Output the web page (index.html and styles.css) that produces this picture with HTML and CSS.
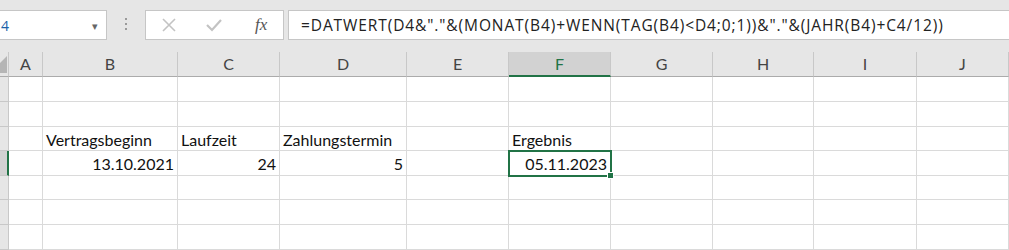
FILE: index.html
```html
<!DOCTYPE html>
<html lang="de">

<head>
    <title>Datumsberechnung</title>
    <link rel="stylesheet" href="styles.css">
</head>

<body>

    <div class="toolbar">
        <div class="namebox">
            <span class="name">4</span>
            <span class="drop">&#9662;</span>
        </div>
        <div class="grip">
            <span></span><span></span><span></span>
        </div>
        <div class="buttons">
            <svg class="btn" width="16" height="16" viewBox="0 0 16 16">
                <path d="M2 2 L14 14 M14 2 L2 14" stroke="#c3c3c3" stroke-width="1.6" fill="none" />
            </svg>
            <svg class="btn" width="18" height="16" viewBox="0 0 18 16">
                <path d="M2 8 L7 13 L16 3" stroke="#c3c3c3" stroke-width="2.2" fill="none" />
            </svg>
            <span class="fx">fx</span>
        </div>
        <div class="formula">=DATWERT(D4&amp;"."&amp;(MONAT(B4)+WENN(TAG(B4)&lt;D4;0;1))&amp;"."&amp;(JAHR(B4)+C4/12))</div>
    </div>

    <div class="sheet" id="sheet"></div>

    <script>
        const sheet = document.getElementById('sheet');
        const cols = ['A', 'B', 'C', 'D', 'E', 'F', 'G', 'H', 'I', 'J'];
        const data = {
            'B3': 'Vertragsbeginn', 'C3': 'Laufzeit', 'D3': 'Zahlungstermin', 'F3': 'Ergebnis',
            'B4': '13.10.2021', 'C4': '24', 'D4': '5', 'F4': '05.11.2023'
        };
        const numbers = ['B4', 'C4', 'D4', 'F4'];

        function addCell(cls, text) {
            const el = document.createElement('div');
            el.className = cls;
            if (text) el.textContent = text;
            sheet.appendChild(el);
            return el;
        }

        addCell('corner').innerHTML = '<span class="tri"></span>';
        cols.forEach(c => {
            addCell(c === 'F' ? 'colhead active' : 'colhead', c);
        });

        for (let r = 1; r <= 7; r++) {
            addCell(r === 4 ? 'rowhead active' : 'rowhead');
            cols.forEach(c => {
                const key = c + r;
                let cls = 'cell';
                if (numbers.includes(key)) cls += ' num';
                if (key === 'F4') cls += ' selected';
                const el = addCell(cls, data[key]);
                if (key === 'F4') el.innerHTML += '<span class="handle"></span>';
            });
        }
    </script>

</body>

</html>
```

FILE: styles.css
```css
body {
    margin: 0;
    width: 1009px;
    height: 250px;
    overflow: hidden;
    background-color: #ffffff;
    font-family: Lato, "Liberation Sans", sans-serif;
}

.toolbar {
    display: flex;
    align-items: flex-start;
    height: 52px;
    padding-top: 10px;
    box-sizing: border-box;
    background-color: #e6e6e6;
}

.namebox {
    display: flex;
    align-items: center;
    justify-content: space-between;
    width: 120px;
    height: 30px;
    margin-left: -13px;
    padding: 0 8px 0 13px;
    box-sizing: border-box;
    background-color: #fff;
    border: 1px solid #c6c6c6;
    font-family: "Open Sans", sans-serif;
    font-size: 14px;
    color: #1d5fa8;
}

.drop {
    font-size: 11px;
    color: #666;
}

.grip {
    display: flex;
    flex-direction: column;
    gap: 3px;
    width: 38px;
    padding-top: 8px;
    align-items: center;
}

.grip span {
    width: 2px;
    height: 2px;
    background-color: #9a9a9a;
}

.buttons {
    display: flex;
    align-items: center;
    width: 139px;
    height: 30px;
    box-sizing: border-box;
    background-color: #fff;
    border: 1px solid #c6c6c6;
    padding-left: 15px;
}

.btn {
    margin-right: 28px;
}

.btn + .btn {
    margin-right: 32px;
}

.fx {
    font-family: "Liberation Serif", serif;
    font-style: italic;
    font-size: 17px;
    color: #555;
}

.formula {
    flex: 1;
    height: 30px;
    margin-left: 4px;
    margin-right: -2px;
    box-sizing: border-box;
    background-color: #fff;
    border: 1px solid #c6c6c6;
    padding-left: 12px;
    line-height: 28px;
    font-family: "Open Sans", sans-serif;
    font-size: 15.5px;
    letter-spacing: 0.9px;
    color: #222;
    white-space: nowrap;
}

.sheet {
    display: grid;
    grid-template-columns: 9px 34px 135px 102px 127px 102px 102px 102px 101px 103px 1fr;
    grid-template-rows: 25px 25px 25px 24px 25px 24px 25px 25px;
    font-size: 16px;
    color: #111;
}

.sheet > div {
    box-sizing: border-box;
    border-right: 1px solid #dadada;
    border-bottom: 1px solid #dadada;
}

.corner {
    position: relative;
    background-color: #e6e6e6;
    border-bottom-color: #ababab !important;
    border-right-color: #c8c8c8 !important;
}

.tri {
    position: absolute;
    right: 1px;
    bottom: 3px;
    width: 0;
    height: 0;
    border-left: 17px solid transparent;
    border-bottom: 17px solid #b5b5b5;
}

.colhead {
    background-color: #e6e6e6;
    border-right-color: #c8c8c8 !important;
    border-bottom-color: #ababab !important;
    text-align: center;
    line-height: 24px;
    color: #444;
}

.colhead.active {
    background-color: #d2d2d2;
    color: #217346;
    border-bottom: 2px solid #217346 !important;
}

.rowhead {
    background-color: #e6e6e6;
    border-right-color: #c8c8c8 !important;
    border-bottom-color: #c8c8c8 !important;
}

.rowhead.active {
    background-color: #d2d2d2;
    border-right: 2px solid #217346 !important;
}

.cell {
    padding: 0 3px;
    line-height: 26px;
    white-space: nowrap;
}

.num {
    text-align: right;
}

.selected {
    position: relative;
    outline: 2px solid #217346;
    outline-offset: -1px;
    z-index: 1;
}

.handle {
    position: absolute;
    right: -4px;
    bottom: -4px;
    width: 5px;
    height: 5px;
    background-color: #217346;
    border: 1px solid #fff;
}
```
